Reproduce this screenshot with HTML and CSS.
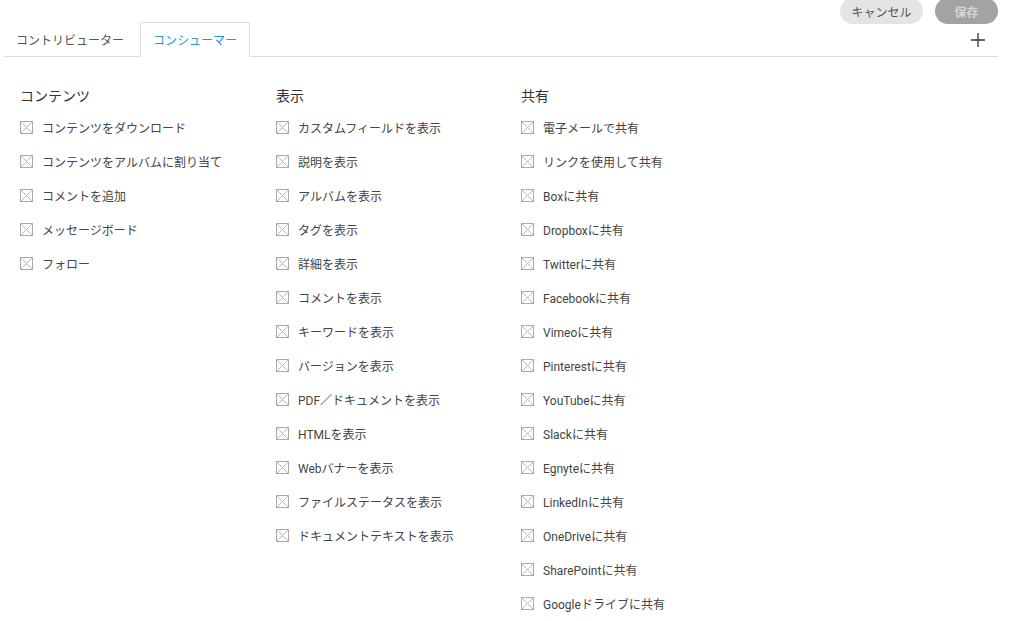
FILE: index.html
```html
<!DOCTYPE html>
<html>
<head>
    <title>Permissions</title>
    <link rel="stylesheet" href="styles.css">
</head>
<body>
    <div class="topbar">
        <button class="btn btn-cancel">キャンセル</button>
        <button class="btn btn-save">保存</button>
    </div>

    <div class="tabs">
        <div class="tab">コントリビューター</div>
        <div class="tab active">コンシューマー</div>
        <div class="tab-add">
            <svg width="14" height="14" viewBox="0 0 14 14"><path d="M7 0V14M0 7H14" stroke="#333" stroke-width="1.3" fill="none"/></svg>
        </div>
    </div>

    <div class="columns">
        <div class="col">
            <h2>コンテンツ</h2>
            <div class="item"><span class="box"></span>コンテンツをダウンロード</div>
            <div class="item"><span class="box"></span>コンテンツをアルバムに割り当て</div>
            <div class="item"><span class="box"></span>コメントを追加</div>
            <div class="item"><span class="box"></span>メッセージボード</div>
            <div class="item"><span class="box"></span>フォロー</div>
        </div>
        <div class="col">
            <h2>表示</h2>
            <div class="item"><span class="box"></span>カスタムフィールドを表示</div>
            <div class="item"><span class="box"></span>説明を表示</div>
            <div class="item"><span class="box"></span>アルバムを表示</div>
            <div class="item"><span class="box"></span>タグを表示</div>
            <div class="item"><span class="box"></span>詳細を表示</div>
            <div class="item"><span class="box"></span>コメントを表示</div>
            <div class="item"><span class="box"></span>キーワードを表示</div>
            <div class="item"><span class="box"></span>バージョンを表示</div>
            <div class="item"><span class="box"></span>PDF／ドキュメントを表示</div>
            <div class="item"><span class="box"></span>HTMLを表示</div>
            <div class="item"><span class="box"></span>Webバナーを表示</div>
            <div class="item"><span class="box"></span>ファイルステータスを表示</div>
            <div class="item"><span class="box"></span>ドキュメントテキストを表示</div>
        </div>
        <div class="col">
            <h2>共有</h2>
            <div class="item"><span class="box"></span>電子メールで共有</div>
            <div class="item"><span class="box"></span>リンクを使用して共有</div>
            <div class="item"><span class="box"></span>Boxに共有</div>
            <div class="item"><span class="box"></span>Dropboxに共有</div>
            <div class="item"><span class="box"></span>Twitterに共有</div>
            <div class="item"><span class="box"></span>Facebookに共有</div>
            <div class="item"><span class="box"></span>Vimeoに共有</div>
            <div class="item"><span class="box"></span>Pinterestに共有</div>
            <div class="item"><span class="box"></span>YouTubeに共有</div>
            <div class="item"><span class="box"></span>Slackに共有</div>
            <div class="item"><span class="box"></span>Egnyteに共有</div>
            <div class="item"><span class="box"></span>LinkedInに共有</div>
            <div class="item"><span class="box"></span>OneDriveに共有</div>
            <div class="item"><span class="box"></span>SharePointに共有</div>
            <div class="item"><span class="box"></span>Googleドライブに共有</div>
        </div>
    </div>
</body>
</html>
```

FILE: styles.css
```css
body {
    margin: 0;
    font-family: Roboto, "Noto Sans CJK JP", sans-serif;
    color: #444;
    background: #fff;
}

.topbar {
    display: flex;
    justify-content: flex-end;
    gap: 12px;
    height: 22px;
    padding-right: 11px;
}

.btn {
    height: 26px;
    margin-top: -2px;
    padding: 0;
    border: none;
    border-radius: 13px;
    white-space: nowrap;
    font-family: Roboto, "Noto Sans CJK JP", sans-serif;
    font-size: 12px;
}

.btn-cancel {
    background-color: #e4e4e4;
    color: #555;
    width: 83px;
}

.btn-save {
    background-color: #a3a3a3;
    color: #d6d6d6;
    font-weight: bold;
    width: 63px;
}

.tabs {
    display: flex;
    align-items: stretch;
    height: 34px;
    margin: 0 11px 0 4px;
    border-bottom: 1px solid #ddd;
}

.tab {
    display: flex;
    align-items: center;
    padding: 0 12px;
    margin-right: 4px;
    font-size: 12px;
    color: #555;
}

.tab.active {
    color: #1e9ad6;
    background: #fff;
    border: 1px solid #ddd;
    border-bottom-color: #fff;
    border-radius: 3px 3px 0 0;
    margin-bottom: -1px;
    padding: 0 12px;
}

.tab-add {
    margin-left: auto;
    display: flex;
    align-items: center;
    padding-right: 13px;
    padding-top: 2px;
}

.columns {
    display: grid;
    grid-template-columns: 256px 245px auto;
    padding: 29px 0 0 20px;
}

.col h2 {
    margin: 0 0 4px;
    font-size: 14px;
    font-weight: normal;
    line-height: 20px;
    color: #333;
}

.item {
    display: flex;
    align-items: center;
    height: 34px;
    font-size: 12px;
    color: #444;
}

.box {
    width: 11px;
    height: 11px;
    margin-right: 9px;
    border: 1px solid #aaa;
    background:
        linear-gradient(to top right, transparent calc(50% - 0.6px), #bbb, transparent calc(50% + 0.6px)),
        linear-gradient(to bottom right, transparent calc(50% - 0.6px), #bbb, transparent calc(50% + 0.6px));
}
```
